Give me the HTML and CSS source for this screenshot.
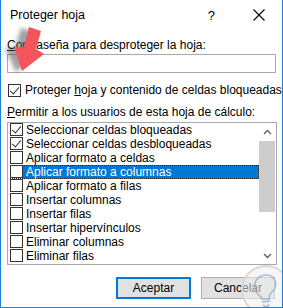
FILE: index.html
```html
<!DOCTYPE html>
<html lang="es">

<head>
  <meta charset="UTF-8">
  <meta name="viewport" content="width=device-width, initial-scale=1.0">
  <title>Proteger hoja</title>
  <link rel="stylesheet" href="styles.css">
</head>

<body>
  <div class="dialog">
    <div class="titlebar">
      <span class="title">Proteger hoja</span>
      <span class="help">?</span>
      <svg class="close" width="12" height="12" viewBox="0 0 12 12">
        <path d="M0.5 0.5 L11.5 11.5 M11.5 0.5 L0.5 11.5" stroke="#000" stroke-width="1.1" fill="none" />
      </svg>
    </div>

    <div class="content">
      <label class="field-label"><u>C</u>ontraseña para desproteger la hoja:</label>
      <div class="password"></div>

      <div class="check-row">
        <span class="box checked"></span>
        <span>Proteger <u>h</u>oja y contenido de celdas bloqueadas</span>
      </div>

      <label class="field-label list-label"><u>P</u>ermitir a los usuarios de esta hoja de cálculo:</label>
      <div class="list">
        <div class="items">
          <div class="item"><span class="box checked"></span><span class="text">Seleccionar celdas bloqueadas</span></div>
          <div class="item"><span class="box checked"></span><span class="text">Seleccionar celdas desbloqueadas</span></div>
          <div class="item"><span class="box"></span><span class="text">Aplicar formato a celdas</span></div>
          <div class="item selected"><span class="box"></span><span class="text">Aplicar formato a columnas</span></div>
          <div class="item"><span class="box"></span><span class="text">Aplicar formato a filas</span></div>
          <div class="item"><span class="box"></span><span class="text">Insertar columnas</span></div>
          <div class="item"><span class="box"></span><span class="text">Insertar filas</span></div>
          <div class="item"><span class="box"></span><span class="text">Insertar hipervínculos</span></div>
          <div class="item"><span class="box"></span><span class="text">Eliminar columnas</span></div>
          <div class="item"><span class="box"></span><span class="text">Eliminar filas</span></div>
        </div>
        <div class="scrollbar">
          <svg class="arrow" width="9" height="6" viewBox="0 0 9 6">
            <path d="M1 5 L4.5 1.5 L8 5" stroke="#606060" stroke-width="1.4" fill="none" />
          </svg>
          <div class="track"><div class="thumb"></div></div>
          <svg class="arrow" width="9" height="6" viewBox="0 0 9 6">
            <path d="M1 1 L4.5 4.5 L8 1" stroke="#606060" stroke-width="1.4" fill="none" />
          </svg>
        </div>
      </div>

      <div class="buttons">
        <button class="btn default">Aceptar</button>
        <button class="btn">Cancelar</button>
      </div>
    </div>

    <!-- red pointer drawn over the dialog -->
    <svg class="pointer" width="50" height="60" viewBox="0 0 50 60">
      <defs>
        <filter id="blur" x="-50%" y="-50%" width="200%" height="200%">
          <feGaussianBlur stdDeviation="2" />
        </filter>
      </defs>
      <polygon points="24,8 36,12 32,30 40,35 19,52 8,28 18,28" fill="#555" opacity="0.55" filter="url(#blur)" transform="translate(-4,0)" />
      <polygon points="28,7 40,11 35,29 43,34 21,51 13,27 23,27" fill="#f4555a" />
    </svg>

    <!-- faded logo mark in the corner -->
    <svg class="watermark" width="52" height="52" viewBox="0 0 52 52">
      <circle cx="26" cy="26" r="24" fill="#eeeeee" fill-opacity="0.55" stroke="#d8d8d8" stroke-width="2" />
      <path d="M20 32 C12 27 13 12 25 11 C36 10 39 22 31 29 C29 31 29 33 29 35 L22 35 C22 34 21 33 20 32 Z M22 38 L30 37 M23 41 C26 44 30 42 28 40" stroke="#8fb3cf" stroke-width="1.6" fill="none" opacity="0.85" />
    </svg>
  </div>
</body>

</html>
```

FILE: styles.css
```css
body {
  margin: 0;
  font-family: "Liberation Sans", Arial, sans-serif;
  font-size: 12px;
  color: #000;
  background: #fff;
}

.dialog {
  position: relative;
  width: 283px;
  height: 308px;
  box-sizing: border-box;
  border: 1px solid #1c7fd6;
  border-top: 0;
  background: #fff;
  overflow: hidden;
}

.titlebar {
  display: flex;
  align-items: center;
  height: 30px;
  padding-left: 9px;
}

.title {
  flex: 1;
  font-size: 12.5px;
}

.help {
  margin-right: 38px;
  font-size: 13px;
}

.close {
  margin-right: 17px;
}

.content {
  padding: 8px 7px 0 6px;
}

.field-label {
  display: block;
  line-height: 15px;
}

.password {
  margin-top: 1px;
  height: 19px;
  width: 269px;
  box-sizing: border-box;
  border: 1px solid #a9a9a9;
}

.check-row {
  display: flex;
  align-items: center;
  margin-top: 10px;
  margin-left: 1px;
  gap: 4px;
  line-height: 14px;
  white-space: nowrap;
}

.box {
  display: inline-block;
  flex: none;
  width: 13px;
  height: 13px;
  box-sizing: border-box;
  border: 1px solid #333;
  background: #fff;
  position: relative;
}

.box.checked::after {
  content: "";
  position: absolute;
  left: 3px;
  top: 0px;
  width: 4px;
  height: 8px;
  border-right: 1px solid #333;
  border-bottom: 1px solid #333;
  transform: rotate(40deg);
}

.list-label {
  margin-top: 8px;
}

.list {
  display: flex;
  margin-top: 2px;
  width: 270px;
  height: 143px;
  box-sizing: border-box;
  border: 1px solid #a9a9a9;
  overflow: hidden;
}

.items {
  flex: 1;
  padding-left: 2px;
  overflow: hidden;
}

.item {
  display: flex;
  height: 14px;
  align-items: flex-start;
}

.item .text {
  flex: 1;
  height: 14px;
  box-sizing: border-box;
  padding: 1px 0 0 3px;
  line-height: 13px;
  white-space: nowrap;
}

.item.selected {
  outline: 1px dotted #333;
  outline-offset: -1px;
}

.item.selected .text {
  background: #0078d7;
  color: #fff;
}

.scrollbar {
  width: 17px;
  display: flex;
  flex-direction: column;
  align-items: center;
}

.arrow {
  flex: none;
  margin: 6px 0 5px;
}

.track {
  flex: 1;
  width: 100%;
}

.thumb {
  margin: 1px 1px 0 0;
  height: 71px;
  background: #cdcdcd;
}

.buttons {
  display: flex;
  justify-content: flex-end;
  gap: 10px;
  margin-top: 12px;
}

.btn {
  width: 74px;
  height: 22px;
  padding: 0;
  font-family: inherit;
  font-size: 12px;
  color: #000;
  background: #e1e1e1;
  border: 1px solid #adadad;
}

.btn.default {
  width: 75px;
  border: 2px solid #0078d7;
}

.pointer {
  position: absolute;
  left: 0;
  top: 20px;
}

.watermark {
  position: absolute;
  left: 239px;
  top: 264px;
}
```
